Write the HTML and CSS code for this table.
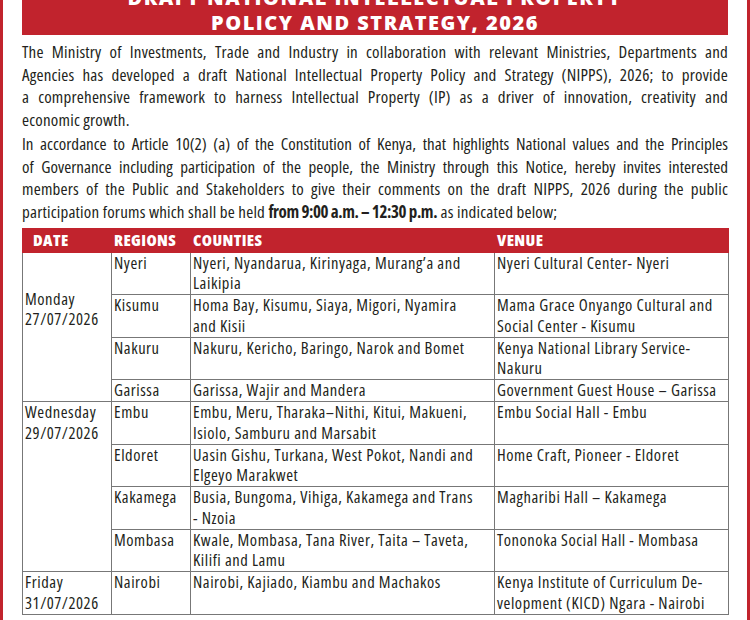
FILE: index.html
```html
<!DOCTYPE html>
<html lang="en">
<head>
    <meta charset="UTF-8">
    <meta name="viewport" content="width=device-width, initial-scale=1.0">
    <title>Draft National Intellectual Property Policy and Strategy, 2026</title>
    <link rel="stylesheet" href="styles.css">
</head>
<body>
<div class="notice">
    <div class="banner">
        <div>DRAFT NATIONAL INTELLECTUAL PROPERTY</div>
        <div>POLICY AND STRATEGY, 2026</div>
    </div>

    <div class="intro">
        <p>
            <span class="line">The Ministry of Investments, Trade and Industry in collaboration with relevant Ministries, Departments and</span>
            <span class="line">Agencies has developed a draft National Intellectual Property Policy and Strategy (NIPPS), 2026; to provide</span>
            <span class="line">a comprehensive framework to harness Intellectual Property (IP) as a driver of innovation, creativity and</span>
            <span class="line last">economic growth.</span>
        </p>
        <p class="second">
            <span class="line tight">In accordance to Article 10(2) (a) of the Constitution of Kenya, that highlights National values and the Principles</span>
            <span class="line tight">of Governance including participation of the people, the Ministry through this Notice, hereby invites interested</span>
            <span class="line">members of the Public and Stakeholders to give their comments on the draft NIPPS, 2026 during the public</span>
            <span class="line last">participation forums which shall be held <strong>from 9:00 a.m. – 12:30 p.m.</strong> as indicated below;</span>
        </p>
    </div>

    <table class="schedule">
        <colgroup>
            <col class="c-date">
            <col class="c-region">
            <col class="c-county">
            <col class="c-venue">
        </colgroup>
        <thead>
            <tr>
                <th class="th-date">DATE</th>
                <th>REGIONS</th>
                <th>COUNTIES</th>
                <th>VENUE</th>
            </tr>
        </thead>
        <tbody>
            <tr>
                <td rowspan="4" class="monday">Monday<br>27/07/2026</td>
                <td>Nyeri</td>
                <td>Nyeri, Nyandarua, Kirinyaga, Murang’a and<br>Laikipia</td>
                <td>Nyeri Cultural Center- Nyeri</td>
            </tr>
            <tr>
                <td>Kisumu</td>
                <td>Homa Bay, Kisumu, Siaya, Migori, Nyamira<br>and Kisii</td>
                <td>Mama Grace Onyango Cultural and<br>Social Center - Kisumu</td>
            </tr>
            <tr>
                <td>Nakuru</td>
                <td>Nakuru, Kericho, Baringo, Narok and Bomet</td>
                <td>Kenya National Library Service-<br>Nakuru</td>
            </tr>
            <tr>
                <td>Garissa</td>
                <td>Garissa, Wajir and Mandera</td>
                <td>Government Guest House – Garissa</td>
            </tr>
            <tr>
                <td rowspan="4">Wednesday<br>29/07/2026</td>
                <td>Embu</td>
                <td>Embu, Meru, Tharaka–Nithi, Kitui, Makueni,<br>Isiolo, Samburu and Marsabit</td>
                <td>Embu Social Hall - Embu</td>
            </tr>
            <tr>
                <td>Eldoret</td>
                <td>Uasin Gishu, Turkana, West Pokot, Nandi and<br>Elgeyo Marakwet</td>
                <td>Home Craft, Pioneer - Eldoret</td>
            </tr>
            <tr>
                <td>Kakamega</td>
                <td>Busia, Bungoma, Vihiga, Kakamega and Trans<br>- Nzoia</td>
                <td>Magharibi Hall – Kakamega</td>
            </tr>
            <tr>
                <td>Mombasa</td>
                <td>Kwale, Mombasa, Tana River, Taita – Taveta,<br>Kilifi and Lamu</td>
                <td>Tononoka Social Hall - Mombasa</td>
            </tr>
            <tr>
                <td>Friday<br>31/07/2026</td>
                <td>Nairobi</td>
                <td>Nairobi, Kajiado, Kiambu and Machakos</td>
                <td>Kenya Institute of Curriculum De-<br>velopment (KICD) Ngara - Nairobi</td>
            </tr>
        </tbody>
    </table>
</div>
</body>
</html>
```

FILE: styles.css
```css
body {
    margin: 0; background: #fff; color: #231f20;
    font-family: "Open Sans", "Noto Sans", sans-serif;
    font-stretch: 75%;
}
.notice {
    width: 750px; box-sizing: border-box;
    border-left: 3px solid #c1232d; border-right: 3px solid #c1232d;
    padding: 0 19px 20px; min-height: 620px; overflow: hidden;
}
.banner {
    background: #c1232d; color: #fff; text-align: center;
    margin-top: -21px; padding: 6px 0 0;
    font-family: "Open Sans", sans-serif; font-stretch: 100%; font-weight: 800;
    font-size: 20px; line-height: 25px; letter-spacing: 1.5px;
}
.intro { margin-top: 6px; font-size: 17px; line-height: 22.5px; letter-spacing: 0.2px; }
.intro p { margin: 0; }
.intro .second { margin-top: 2px; }
.intro strong { letter-spacing: -0.4px; }
.line { display: block; white-space: nowrap; text-align: justify; text-align-last: justify; }
.line.last { text-align-last: left; }
.intro .tight { letter-spacing: 0; }

.schedule {
    width: 706px; border-collapse: collapse; table-layout: fixed;
    margin-top: 5px; font-size: 16.5px; line-height: 20.5px; letter-spacing: 0.55px;
}
.c-date { width: 89px; }
.c-region { width: 79px; }
.c-county { width: 304px; }
.c-venue { width: 234px; }
.schedule th {
    background: #c1232d; color: #fff; text-align: left;
    font-weight: 800; padding: 1px 2px;
    border: 1px solid #c1232d; letter-spacing: 0.4px;
}
.schedule .th-date { padding-left: 10px; }
.schedule td {
    border: 1px solid #777; padding: 0 2px 0.5px;
    vertical-align: top; white-space: nowrap;
}
.schedule td.monday { padding-top: 36px; }
```
